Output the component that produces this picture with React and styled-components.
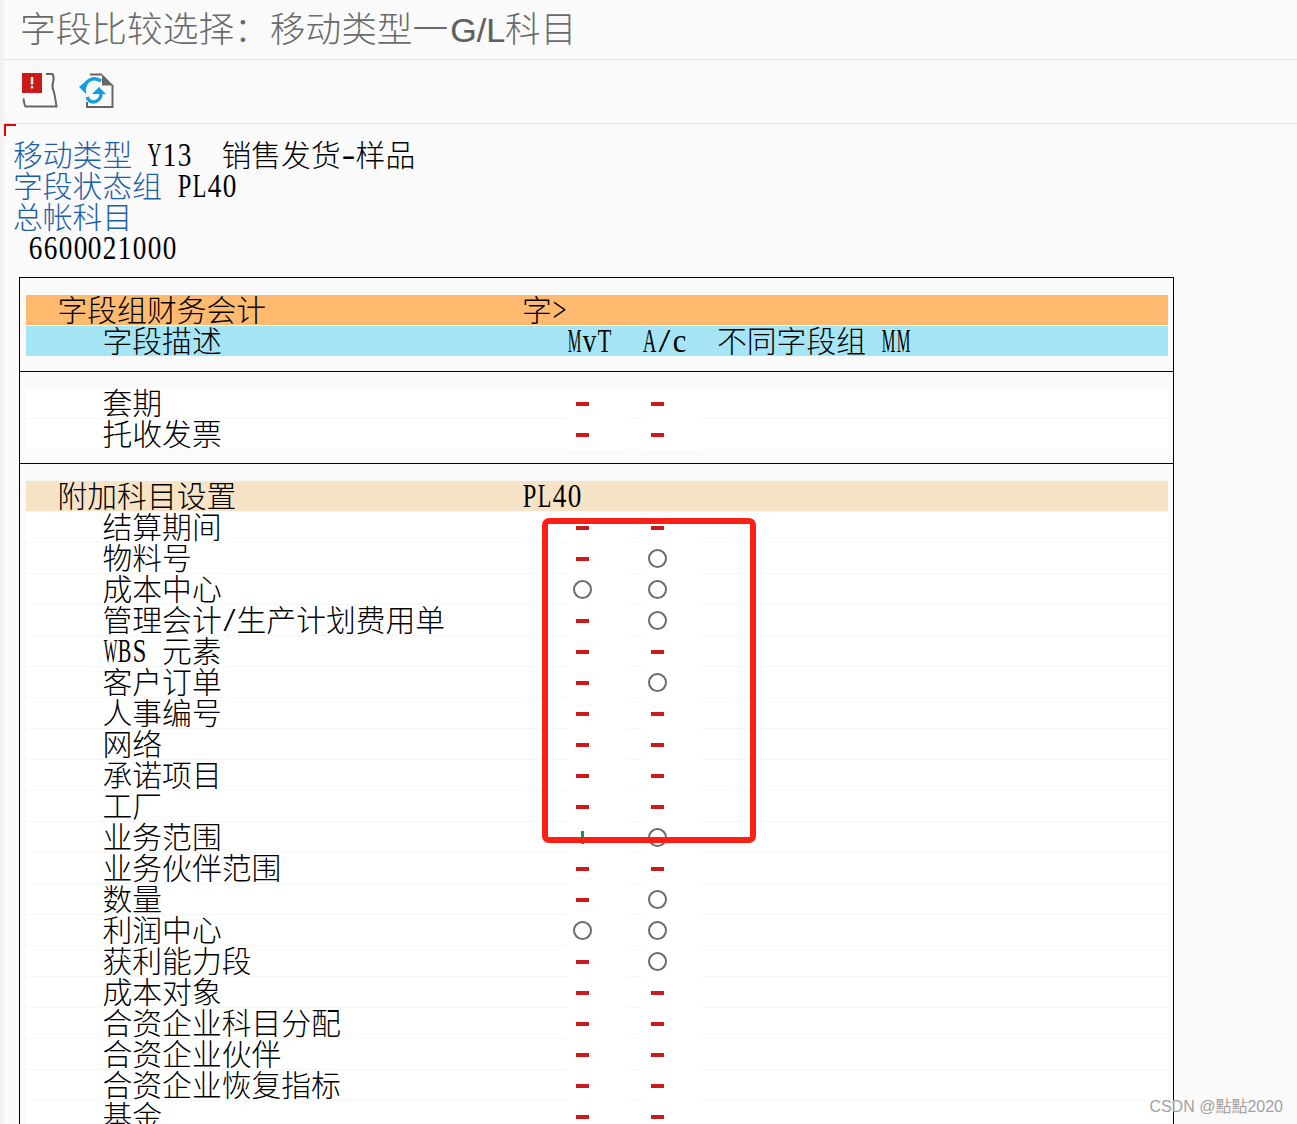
import React from "react";
import styled, { createGlobalStyle } from "styled-components";

const CW = 29.8;
const HW = CW / 2;

const Global = createGlobalStyle`
  html, body { margin: 0; padding: 0; height: 1124px; overflow: hidden; background: #fafafa; }
  #root { height: 1124px; overflow: hidden; }
`;

const Page = styled.div`
  position: relative;
  height: 1124px;
  overflow: hidden;
  box-sizing: border-box;
  border-left: 4px solid #f2f2f2;
  background: #fafafa;
  color: #000;
  font-family: "Noto Sans CJK SC", "Liberation Sans", sans-serif;
  font-weight: 300;
  font-size: ${CW}px;
  line-height: 31px;
`;

const TitleBar = styled.header`
  height: 59px;
  border-bottom: 1px solid #e2e2e2;
  padding-left: 16px;
  font-size: 35.7px;
  line-height: 54px;
  color: #6a6a6a;
  white-space: pre;
`;

const TitleLatin = styled.span`
  font-family: "Liberation Sans", sans-serif;
  font-weight: 400;
  font-size: 34px;
  color: #5f5f5f;
  margin: 0 0 0 2px;
  -webkit-text-stroke: 0.2px #5f5f5f;
`;

const Toolbar = styled.div`
  height: 53px;
  border-bottom: 1px solid #e2e2e2;
  display: flex;
  align-items: flex-start;
  gap: 16px;
  padding: 10px 0 0 16px;
`;

const Icon = styled.svg`
  display: block;
  flex: none;
`;

const CornerMark = styled.i`
  position: absolute;
  left: 0;
  top: 124px;
  width: 12px;
  height: 12px;
  box-sizing: border-box;
  border-top: 2px solid #e00000;
  border-left: 2px solid #e00000;
`;

const Info = styled.section`
  padding: 16px 0 0 9px;
`;

const InfoLine = styled.div`
  height: 31px;
  line-height: 27px;
  white-space: pre;
`;

const Label = styled.span`
  color: #1c5ea8;
`;

const Glyph = styled.span`
  display: inline-flex;
  justify-content: center;
  width: ${HW}px;
  font-family: "Liberation Serif", serif;
  font-weight: 400;
  font-size: 33px;
  white-space: pre;
  transform: scaleX(${(p) => p.$sx});
`;

const ADV = {
  M: 0.889, W: 0.944, A: 0.722, B: 0.667, S: 0.556, T: 0.611, P: 0.556, L: 0.611, Y: 0.722,
  v: 0.5, c: 0.444, "/": 0.278, "-": 0.333, ">": 0.564, " ": 0.25,
};
const scaleOf = (ch) => {
  const adv = (ADV[ch] ?? 0.5) * 33;
  return Math.min(1.3, 13.6 / adv).toFixed(3);
};

const Txt = ({ children }) => {
  const parts = String(children).match(/[\x00-\x7f]+|[^\x00-\x7f]+/g) || [];
  return (
    <>
      {parts.map((t, i) =>
        /^[\x00-\x7f]/.test(t) ? (
          [...t].map((ch, j) => (
            <Glyph key={`${i}-${j}`} $sx={scaleOf(ch)}>
              {ch}
            </Glyph>
          ))
        ) : (
          <span key={i}>{t}</span>
        )
      )}
    </>
  );
};

const Box = styled.section`
  margin: 13px 0 0 15px;
  width: 1155px;
  box-sizing: border-box;
  border: 1px solid #000;
  border-bottom: 0;
  padding: 17px 5px 0 6px;
  height: 1200px;
`;

const Divider = styled.hr`
  margin: ${(p) => p.$before}px -5px ${(p) => p.$after}px -6px;
  border: 0;
  height: 1px;
  background: #000;
`;

const Band = styled.div`
  display: grid;
  grid-template-columns: ${(p) => p.$cols};
  height: 30px;
  line-height: 26px;
  margin-bottom: 1px;
  background: ${(p) => p.$bg};
  white-space: pre;
`;

const Row = styled.div`
  display: grid;
  grid-template-columns: 541px 60px 15px 60px 1fr;
  height: 31px;
  line-height: 26px;
  background: linear-gradient(#ffffff, #ffffff) top/100% 30px no-repeat, #f6f6f6;
  white-space: pre;
`;

const RowLabel = styled.div`
  padding-left: 76.5px;
`;

const GroupTitle = styled.div`
  padding-left: 31.5px;
`;

const Cell = styled.div`
  grid-column: ${(p) => p.$col};
  background: #fff;
  width: 60px;
  height: 31px;
`;

const Mark = styled.div`
  width: 31px;
  height: 31px;
  display: flex;
  align-items: center;
  justify-content: center;
`;

const Dash = styled.i`
  display: block;
  width: 13px;
  height: 4px;
  margin-top: 1px;
  background: #cc1a1a;
`;

const Ring = styled.i`
  display: block;
  width: 19px;
  height: 19px;
  box-sizing: border-box;
  margin-top: -1px;
  border: 2.5px solid #6b6b6b;
  border-radius: 50%;
`;

const Plus = styled.i`
  display: block;
  position: relative;
  width: 13px;
  height: 13px;
  margin-top: -1px;
  &::before {
    content: "";
    position: absolute;
    left: 5px;
    top: 0;
    width: 3px;
    height: 13px;
    background: #0a9a55;
  }
  &::after {
    content: "";
    position: absolute;
    left: 0;
    top: 6px;
    width: 13px;
    height: 1px;
    background: #3c6b4c;
  }
`;

const Highlight = styled.div`
  position: absolute;
  left: 538px;
  top: 518px;
  width: 214px;
  height: 325px;
  box-sizing: border-box;
  border: 6px solid #ff2015;
  border-radius: 7px;
  pointer-events: none;
`;

const Watermark = styled.div`
  position: absolute;
  right: 14px;
  top: 1097px;
  font-family: "Liberation Sans", "Noto Sans CJK TC", sans-serif;
  font-weight: 400;
  font-size: 16px;
  line-height: 20px;
  color: #a2a2a2;
`;

const Symbol = ({ k }) => (
  <Mark>{k === "-" ? <Dash /> : k === "o" ? <Ring /> : <Plus />}</Mark>
);

const IconNote = () => (
  <Icon width="40" height="40" viewBox="0 0 40 40">
    <path
      d="M26 4h6.500c1.600 3 1.600 5 .6 8-1 3.200-1 5.500.2 8 1 2.500 2 8 3.200 16.500H5.500c-1-1-1.500-4-2-8"
      fill="none"
      stroke="#666"
      strokeWidth="2"
    />
    <rect x="2" y="3" width="20" height="20" fill="#cc1a1a" />
    <rect x="10.800" y="7" width="2.400" height="7.500" fill="#fff" />
    <rect x="10.800" y="16" width="2.400" height="2.400" fill="#fff" />
  </Icon>
);

const IconRefresh = () => (
  <Icon width="40" height="40" viewBox="0 0 40 40">
    <path d="M14 4.500H26M11 32V37H36.500V15" fill="none" stroke="#666" strokeWidth="2" />
    <path d="M26 4 L37.500 15.500 H26 Z" fill="#666" />
    <path d="M9 17 C10 10 18 6 25 11" fill="none" stroke="#0f9fe6" strokeWidth="3.400" />
    <path d="M3 17 L10 11 L10 24 Z" fill="#0f9fe6" />
    <path d="M25 24 C25 31 15 36 11 27" fill="none" stroke="#0f9fe6" strokeWidth="3.400" />
    <path d="M16 24 L30 24 L23 17 Z" fill="#0f9fe6" />
  </Icon>
);

const firstRows = [
  ["套期", "-", "-"],
  ["托收发票", "-", "-"],
];

const mainRows = [
  ["结算期间", "-", "-"],
  ["物料号", "-", "o"],
  ["成本中心", "o", "o"],
  ["管理会计/生产计划费用单", "-", "o"],
  ["WBS 元素", "-", "-"],
  ["客户订单", "-", "o"],
  ["人事编号", "-", "-"],
  ["网络", "-", "-"],
  ["承诺项目", "-", "-"],
  ["工厂", "-", "-"],
  ["业务范围", "+", "o"],
  ["业务伙伴范围", "-", "-"],
  ["数量", "-", "o"],
  ["利润中心", "o", "o"],
  ["获利能力段", "-", "o"],
  ["成本对象", "-", "-"],
  ["合资企业科目分配", "-", "-"],
  ["合资企业伙伴", "-", "-"],
  ["合资企业恢复指标", "-", "-"],
  ["基金", "-", "-"],
];

const FieldRow = ({ label, a, b }) => (
  <Row>
    <RowLabel>
      <Txt>{label}</Txt>
    </RowLabel>
    <Cell $col={2}>
      <Symbol k={a} />
    </Cell>
    <Cell $col={4}>
      <Symbol k={b} />
    </Cell>
  </Row>
);

export default function App() {
  return (
    <Page>
      <Global />
      <TitleBar>
        字段比较选择：移动类型一<TitleLatin>G/L</TitleLatin>科目
      </TitleBar>
      <Toolbar>
        <IconNote />
        <IconRefresh />
      </Toolbar>
      <CornerMark />
      <Info>
        <InfoLine>
          <Label>移动类型</Label>
          <Txt>{" Y13  "}</Txt>
          <Txt>销售发货-样品</Txt>
        </InfoLine>
        <InfoLine>
          <Label>字段状态组</Label>
          <Txt>{" PL40"}</Txt>
        </InfoLine>
        <InfoLine>
          <Label>总帐科目</Label>
        </InfoLine>
        <InfoLine>
          <Txt>{" 6600021000"}</Txt>
        </InfoLine>
      </Info>
      <Box>
        <Band $bg="#ffba70" $cols="496px 1fr">
          <GroupTitle>
            <Txt>字段组财务会计</Txt>
          </GroupTitle>
          <span>
            <Txt>字&gt;</Txt>
          </span>
        </Band>
        <Band $bg="#a6e5f6" $cols="541px 75px 75px 1fr">
          <RowLabel>
            <Txt>字段描述</Txt>
          </RowLabel>
          <span>
            <Txt>MvT</Txt>
          </span>
          <span>
            <Txt>A/c</Txt>
          </span>
          <span>
            <Txt>不同字段组 MM</Txt>
          </span>
        </Band>
        <Divider $before={15} $after={16} />
        {firstRows.map(([l, a, b]) => (
          <FieldRow key={l} label={l} a={a} b={b} />
        ))}
        <Divider $before={13} $after={17} />
        <Band $bg="#f7e3c6" $cols="496px 1fr">
          <GroupTitle>
            <Txt>附加科目设置</Txt>
          </GroupTitle>
          <span>
            <Txt>PL40</Txt>
          </span>
        </Band>
        {mainRows.map(([l, a, b]) => (
          <FieldRow key={l} label={l} a={a} b={b} />
        ))}
      </Box>
      <Highlight />
      <Watermark>CSDN @點點2020</Watermark>
    </Page>
  );
}
